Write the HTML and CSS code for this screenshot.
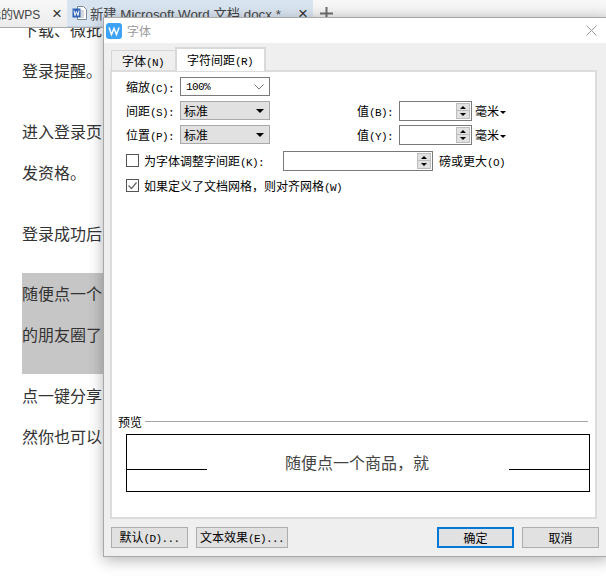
FILE: index.html
```html
<!DOCTYPE html>
<html lang="zh-CN">
<head>
<meta charset="utf-8">
<title>字体</title>
<link rel="stylesheet" href="styles.css">
</head>
<body>
<header class="tabbar">
  <div class="tab tab-first"><span class="tab-name">我的WPS</span><span class="tab-close">×</span></div>
  <div class="tab tab-active">
    <svg class="doc-icon" width="16" height="16" viewBox="0 0 16 16"><path d="M5.500 1.500h6l3 3v10h-9z" fill="#fff" stroke="#7d8794"/><path d="M8 6h4M8 8h4M8 10h4M8 12h4" stroke="#a8b1bd"/><rect x="0.500" y="3.500" width="8" height="9" fill="#2f62b5"/><path d="M2 5.500l1 5 1.500-4 1.500 4 1-5" fill="none" stroke="#fff"/></svg>
    <span class="tab-name">新建 Microsoft Word 文档.docx *</span><span class="tab-close">×</span>
  </div>
  <svg class="plus" width="13" height="13" viewBox="0 0 13 13"><path d="M0 6.500h13M6.500 0v13" stroke="#6e6e6e" stroke-width="2"/></svg>
</header>
<main class="doc">
  <p class="para first">下载、微批</p>
  <p class="para">登录提醒。</p>
  <p class="para">进入登录页<br>发资格。</p>
  <p class="para before-selected">登录成功后</p>
  <p class="para selected">随便点一个<br>的朋友圈了</p>
  <p class="para">点一键分享<br>然你也可以</p>
</main>
<section class="dialog">
  <div class="titlebar">
    <svg class="logo" width="16" height="16" viewBox="0 0 16 16"><rect width="16" height="16" rx="3" fill="#3ea2f7"/><path d="M3 4.500l2.500 7L8 5.500l2.500 6 2.500-7" fill="none" stroke="#fff" stroke-width="1.500"/></svg>
    <span class="title">字体</span>
    <svg class="dlg-close" width="11" height="11" viewBox="0 0 11 11"><path d="M.5.500l10 10M10.500.500l-10 10" stroke="#9a9a9a"/></svg>
  </div>
  <div class="body">
    <div class="tabs">
      <div class="dtab">字体<span class="lat">(N)</span></div>
      <div class="dtab dtab-active">字符间距<span class="lat">(R)</span></div>
    </div>
    <div class="panel">
      <div class="form">
        <div class="row">
          <label class="lbl">缩放<span class="lat">(C):</span></label>
          <div class="combo combo-white"><span class="lat">100%</span>
            <svg class="chev" width="10" height="6" viewBox="0 0 10 6"><path d="M.5.500L5 5 9.500.500" fill="none" stroke="#777"/></svg>
          </div>
        </div>
        <div class="row">
          <label class="lbl">间距<span class="lat">(S):</span></label>
          <div class="combo">标准<span class="caret"></span></div>
          <label class="lbl lbl-val">值<span class="lat">(B):</span></label>
          <div class="spin spin-s"><div class="spin-btns"><span class="up"></span><span class="down"></span></div></div>
          <span class="unit">毫米<span class="caret caret-s"></span></span>
        </div>
        <div class="row">
          <label class="lbl">位置<span class="lat">(P):</span></label>
          <div class="combo">标准<span class="caret"></span></div>
          <label class="lbl lbl-val">值<span class="lat">(Y):</span></label>
          <div class="spin spin-s"><div class="spin-btns"><span class="up"></span><span class="down"></span></div></div>
          <span class="unit">毫米<span class="caret caret-s"></span></span>
        </div>
        <div class="row row-kern">
          <span class="check"></span>
          <label class="lbl lbl-kern">为字体调整字间距<span class="lat">(K):</span></label>
          <div class="spin spin-l"><div class="spin-btns"><span class="up"></span><span class="down"></span></div></div>
          <span class="unit unit-kern">磅或更大<span class="lat">(O)</span></span>
        </div>
        <div class="row row-grid">
          <span class="check"><svg width="11" height="11" viewBox="0 0 11 11"><path d="M1.500 5.500l3 3 5-6" fill="none" stroke="#666" stroke-width="1.200"/></svg></span>
          <label class="lbl lbl-kern">如果定义了文档网格，则对齐网格<span class="lat">(W)</span></label>
        </div>
      </div>
      <div class="preview">
        <div class="preview-head"><span>预览</span><span class="rule"></span></div>
        <div class="preview-box">
          <span class="pline"></span>
          <span class="ptext">随便点一个商品，就</span>
          <span class="pline"></span>
        </div>
      </div>
    </div>
    <div class="footer">
      <button class="btn btn-d">默认<span class="lat">(D)...</span></button>
      <button class="btn btn-e">文本效果<span class="lat">(E)...</span></button>
      <button class="btn btn-ok">确定</button>
      <button class="btn btn-c">取消</button>
    </div>
  </div>
</section>
</body>
</html>
```
FILE: styles.css
```css
* { box-sizing: border-box; }
html, body { margin: 0; padding: 0; }
body {
  width: 606px;
  height: 584px;
  overflow: hidden;
  background: #fff;
  position: relative;
  font-family: "Noto Sans CJK SC", sans-serif;
  color: #000;
}
.tabbar {
  height: 28px;
  display: flex;
  align-items: stretch;
  background: linear-gradient(#f8f8f8, #ececec);
  border-bottom: 1px solid #a9a9a9;
  position: relative;
  z-index: 1;
  font-family: "Liberation Sans", "Noto Sans CJK SC", sans-serif;
  font-size: 13.330px;
  color: #444;
  white-space: nowrap;
}
.tab { display: flex; align-items: center; flex: none; }
.tab-first { width: 78px; margin-left: -11px; justify-content: space-between; font-size: 12px; }
.tab-active { width: 246px; background: #d9e4f1; padding-left: 5px; border-bottom: 1px solid #c5d3e6; }
.doc-icon { flex: none; margin-right: 2px; }
.tab-close { font-size: 17px; line-height: 1; color: #333; margin-left: auto; margin-right: 5px; }
.plus { align-self: center; margin-left: 7px; }
.doc {
  padding: 0 0 0 22px;
  font-size: 16px;
  line-height: 41px;
  color: #333;
  margin-top: -19px;
}
.para { margin: 0 0 20px; white-space: nowrap; }
.para.first { margin-bottom: 0; }
.para.before-selected { margin-bottom: 19px; }
.para.selected { background: #c6c6c6; padding-bottom: 19px; margin-bottom: 1px; margin-right: 400px; }
.dialog {
  position: absolute;
  left: 103px;
  top: 17px;
  width: 506px;
  height: 540px;
  background: #efefef;
  border: 1px solid #a8a8a8;
  box-shadow: 0 3px 14px rgba(0,0,0,.3);
  z-index: 2;
  display: flex;
  flex-direction: column;
  font-size: 12px;
}
.lat { font-family: "Liberation Mono", monospace; font-size: 11px; letter-spacing: -0.600px; }
.titlebar {
  height: 25px;
  background: #fff;
  display: flex;
  align-items: center;
  padding-left: 2px;
  flex: none;
}
.title { font-size: 12px; color: #9a9a9a; margin-left: 5px; }
.dlg-close { margin-left: auto; margin-right: 11px; }
.body { flex: 1; display: flex; flex-direction: column; padding: 0 0 0 6px; }
.tabs { display: flex; align-items: flex-end; height: 27px; padding-left: 1px; flex: none; }
.dtab {
  height: 20px;
  padding: 0 0 0 10px;
  width: 64px;
  line-height: 20px;
  background: #efefef;
  border: 1px solid #d6d6d6;
  border-bottom: 0;
  border-right: 0;
}
.dtab-active {
  width: 91px;
  height: 24px;
  background: #fff;
  border: 2px solid #d9d9d9;
  border-bottom: 0;
  padding: 0 0 0 10px;
  line-height: 22px;
  position: relative;
  top: 1px;
}
.panel {
  width: 487px;
  height: 449px;
  background: #fff;
  border: 2px solid #dcdcdc;
  display: flex;
  flex-direction: column;
  padding: 5px 7px 0 14px;
  flex: none;
}
.form { display: flex; flex-direction: column; gap: 5px; height: 336px; }
.row { display: flex; align-items: center; height: 19px; white-space: nowrap; }
.lbl { width: 54px; flex: none; }
.lbl-val { width: 42px; margin-left: 87px; }
.combo {
  width: 90px;
  height: 19px;
  background: #e1e1e1;
  border: 1px solid #a9a9a9;
  display: flex;
  align-items: center;
  padding-left: 3px;
  position: relative;
  flex: none;
}
.combo-white { background: #fff; border-color: #7a7a7a; padding-left: 5px; }
.chev { position: absolute; right: 5px; top: 6px; }
.caret {
  position: absolute;
  right: 5px;
  top: 7px;
  width: 0;
  height: 0;
  border-left: 4px solid transparent;
  border-right: 4px solid transparent;
  border-top: 4px solid #000;
}
.caret-s {
  position: static;
  display: inline-block;
  border-left-width: 3px;
  border-right-width: 3px;
  border-top-width: 3px;
  margin-left: 1px;
  vertical-align: 2px;
}
.spin {
  height: 20px;
  border: 1px solid #7a7a7a;
  background: #fff;
  display: flex;
  justify-content: flex-end;
  align-items: stretch;
  padding: 1px 1px 1px 0;
  flex: none;
}
.spin-s { width: 73px; }
.spin-l { width: 150px; margin-left: 19px; margin-right: 6px; }
.spin-btns {
  width: 14px;
  display: flex;
  flex-direction: column;
  background: #e1e1e1;
  border: 1px solid #bdbdbd;
}
.spin-btns span { flex: 1; position: relative; }
.up::after, .down::after {
  content: "";
  position: absolute;
  left: 3px;
  width: 0;
  height: 0;
  border-left: 3px solid transparent;
  border-right: 3px solid transparent;
}
.up::after { top: 2px; border-bottom: 3px solid #000; }
.down::after { bottom: 2px; border-top: 3px solid #000; }
.up { border-bottom: 1px solid #bdbdbd; }
.unit { margin-left: 3px; }
.unit-kern { margin-left: 0; }
.row-kern { height: 21px; margin-top: 1px; }
.row-grid { height: 19px; }
.check {
  width: 13px;
  height: 13px;
  border: 1px solid #555;
  background: #fff;
  flex: none;
  display: flex;
  align-items: center;
  justify-content: center;
  margin-right: 5px;
}
.lbl-kern { width: auto; }
.preview-head { display: flex; align-items: center; height: 16px; margin-left: -8px; }
.rule { flex: 1; height: 1px; background: #a6a6a6; margin-left: 3px; }
.preview-box {
  margin-top: 5px;
  width: 464px;
  height: 58px;
  border: 1px solid #000;
  display: flex;
  align-items: center;
  justify-content: space-between;
  position: relative;
}
.pline { width: 80px; height: 1px; background: #000; margin-top: 12px; }
.ptext { font-size: 16px; color: #444; margin: -3px 2px 0 0; }
.footer { position: relative; flex: 1; display: flex; align-items: flex-start; padding: 8px 0 0 1px; }
.btn {
  height: 21px;
  width: 77px;
  padding: 0;
  font: inherit;
  font-size: 12px;
  line-height: 1;
  background: #e1e1e1;
  border: 1px solid #adadad;
  color: #000;
  flex: none;
  white-space: nowrap;
}
.btn-e { width: 92px; margin-left: 8px; }
.btn-ok { margin-left: 149px; border: 2px solid #0078d7; }
.btn-c { margin-left: 8px; }
```
